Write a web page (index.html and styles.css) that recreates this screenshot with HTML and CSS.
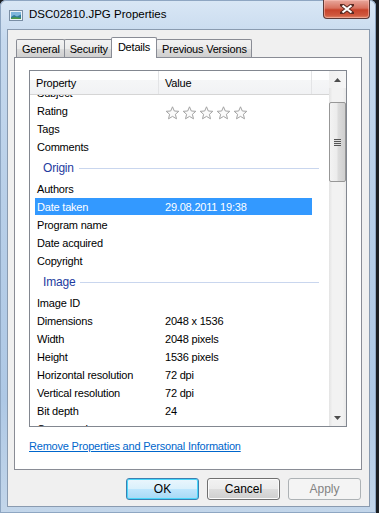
FILE: index.html
```
<!DOCTYPE html>
<html lang="en">
<head>
    <meta charset="UTF-8">
    <title>DSC02810.JPG Properties</title>
    <link rel="stylesheet" href="styles.css">
</head>
<body>
    <div class="window">
        <div class="titlebar">
            <svg class="app-icon" width="14" height="11" viewBox="0 0 14 11">
                <rect x="0.5" y="0.5" width="13" height="10" fill="#eaf2f8" stroke="#7a8ea4"/>
                <rect x="2" y="2" width="10" height="7" fill="#7fb6dc"/>
                <path d="M2 7 L5 5 L8 6.5 L12 4.5 L12 9 L2 9 Z" fill="#2f7a9a"/>
                <path d="M2 8 L6 7 L12 8 L12 9 L2 9 Z" fill="#4d9a4a"/>
            </svg>
            <span class="title">DSC02810.JPG Properties</span>
            <button class="close-btn">
                <svg width="14" height="10" viewBox="0 0 14 10">
                    <path d="M2 1 L12 9 M12 1 L2 9" stroke="#5a2a22" stroke-width="4" stroke-linecap="square"/>
                    <path d="M2.5 1.5 L11.5 8.5 M11.5 1.5 L2.5 8.5" stroke="#fff" stroke-width="2.2"/>
                </svg>
            </button>
        </div>

        <div class="client">
            <div class="tabs">
                <div class="tab">General</div>
                <div class="tab">Security</div>
                <div class="tab active">Details</div>
                <div class="tab">Previous Versions</div>
            </div>

            <div class="tab-page">
                <div class="listview">
                    <div class="list-main">
                        <div class="list-header">
                            <div class="col col-prop">Property</div>
                            <div class="col col-value">Value</div>
                            <div class="col col-rest"></div>
                        </div>
                        <div class="rows">
                            <div class="rows-inner">
                                <div class="row"><span class="prop">Subject</span></div>
                                <div class="row">
                                    <span class="prop">Rating</span>
                                    <span class="value stars">
                                        <svg width="85" height="15" viewBox="0 0 85 15">
                                            <defs>
                                                <path id="star" d="M7 0.8 L8.8 5 L13.3 5.3 L9.9 8.3 L11 12.8 L7 10.4 L3 12.8 L4.1 8.3 L0.7 5.3 L5.2 5 Z" fill="#fbfbfb" stroke="#a3a3a3" stroke-width="1" stroke-linejoin="round"/>
                                            </defs>
                                            <use href="#star" x="0.5" y="1"/>
                                            <use href="#star" x="17.5" y="1"/>
                                            <use href="#star" x="34.5" y="1"/>
                                            <use href="#star" x="51.5" y="1"/>
                                            <use href="#star" x="68.5" y="1"/>
                                        </svg>
                                    </span>
                                </div>
                                <div class="row"><span class="prop">Tags</span></div>
                                <div class="row"><span class="prop">Comments</span></div>
                                <div class="group"><span>Origin</span></div>
                                <div class="row"><span class="prop">Authors</span></div>
                                <div class="row selected"><span class="prop">Date taken</span><span class="value">29.08.2011 19:38</span></div>
                                <div class="row"><span class="prop">Program name</span></div>
                                <div class="row"><span class="prop">Date acquired</span></div>
                                <div class="row"><span class="prop">Copyright</span></div>
                                <div class="group"><span>Image</span></div>
                                <div class="row"><span class="prop">Image ID</span></div>
                                <div class="row"><span class="prop">Dimensions</span><span class="value">2048 x 1536</span></div>
                                <div class="row"><span class="prop">Width</span><span class="value">2048 pixels</span></div>
                                <div class="row"><span class="prop">Height</span><span class="value">1536 pixels</span></div>
                                <div class="row"><span class="prop">Horizontal resolution</span><span class="value">72 dpi</span></div>
                                <div class="row"><span class="prop">Vertical resolution</span><span class="value">72 dpi</span></div>
                                <div class="row"><span class="prop">Bit depth</span><span class="value">24</span></div>
                                <div class="row"><span class="prop">Compression</span></div>
                            </div>
                        </div>
                    </div>
                    <div class="scrollbar">
                        <div class="arrow up">
                            <svg width="7" height="4" viewBox="0 0 7 4"><path d="M0 4 L3.5 0 L7 4 Z" fill="#4d4d4d"/></svg>
                        </div>
                        <div class="track">
                            <div class="thumb">
                                <span class="grip"></span>
                            </div>
                        </div>
                        <div class="arrow down">
                            <svg width="7" height="4" viewBox="0 0 7 4"><path d="M0 0 L7 0 L3.5 4 Z" fill="#4d4d4d"/></svg>
                        </div>
                    </div>
                </div>
                <a class="remove-link" href="#">Remove Properties and Personal Information</a>
            </div>

            <div class="buttons">
                <button class="btn default">OK</button>
                <button class="btn">Cancel</button>
                <button class="btn" disabled>Apply</button>
            </div>
        </div>
    </div>
</body>
</html>
```

FILE: styles.css
```
body {
    margin: 0;
    background: #1b1e22;
    font-family: "Liberation Sans", Arial, sans-serif;
    font-size: 11px;
    letter-spacing: -0.2px;
    color: #000;
}
.window {
    width: 376px;
    height: 513px;
    box-sizing: border-box;
    padding: 0 6px 6px 7px;
    border-radius: 6px 6px 0 0;
    background: linear-gradient(to bottom, #d9e7f5 0px, #c6d9ee 40px, #b8cfe8 200px, #aec8e5 400px, #c3d6ea 513px);
    box-shadow: inset 0 0 0 1px #8ea6c2;
    display: flex;
    flex-direction: column;
}
.titlebar {
    height: 29px;
    display: flex;
    align-items: flex-start;
    position: relative;
}
.app-icon {
    margin: 10px 0 0 2px;
}
.title {
    margin: 8px 0 0 6px;
    font-size: 11.5px;
    letter-spacing: 0;
    color: #000;
}
.close-btn {
    position: absolute;
    right: 0;
    top: 0;
    width: 47px;
    height: 19px;
    padding: 0;
    border: 1px solid #5c3a38;
    border-top: none;
    border-radius: 0 0 4px 4px;
    background: linear-gradient(to bottom, #e8a89d 0%, #d8715e 45%, #c7432b 55%, #d0583e 85%, #e08a6c 100%);
    box-shadow: inset 0 0 0 1px rgba(255, 200, 190, 0.5);
    display: flex;
    align-items: center;
    justify-content: center;
}
.client {
    flex: 1;
    background: #f0f0f0;
    border: 1px solid #8a9bb0;
    display: flex;
    flex-direction: column;
    padding: 7px 7px 0 6px;
}
.tabs {
    display: flex;
    align-items: flex-end;
    padding-left: 2px;
    height: 20px;
    position: relative;
    z-index: 1;
}
.tab {
    height: 18px;
    box-sizing: border-box;
    padding: 3px 4px 0 5px;
    border: 1px solid #898c95;
    border-bottom: none;
    border-radius: 2px 2px 0 0;
    background: linear-gradient(to bottom, #f2f2f2 0%, #ebebeb 50%, #dddddd 51%, #cfcfcf 100%);
    margin-right: -1px;
}
.tab.active {
    height: 21px;
    margin: 0 -1px -1px -1px;
    padding: 3px 6px 0 6px;
    background: #fff;
    position: relative;
    z-index: 2;
}
.tab-page {
    height: 413px;
    box-sizing: border-box;
    background: #fff;
    border: 1px solid #898c95;
    padding: 12px 14px 0 14px;
}
.listview {
    height: 357px;
    box-sizing: border-box;
    border: 1px solid #828790;
    display: flex;
}
.list-main {
    flex: 1;
    display: flex;
    flex-direction: column;
    min-width: 0;
}
.list-header {
    height: 24px;
    display: flex;
    background: linear-gradient(to bottom, #ffffff 0%, #ffffff 40%, #f5f6f7 41%, #f1f2f4 100%);
    border-bottom: 1px solid #d5d5d5;
    box-sizing: border-box;
}
.col {
    box-sizing: border-box;
    border-right: 1px solid #e3e4e6;
    padding: 6px 0 0 6px;
}
.col-prop {
    width: 129px;
}
.col-value {
    width: 153px;
}
.col-rest {
    flex: 1;
    border-right: none;
}
.rows {
    flex: 1;
    overflow: hidden;
}
.rows-inner {
    margin-top: -11px;
}
.row {
    height: 18px;
    display: flex;
    align-items: center;
    margin: 0 17px 0 5px;
    box-sizing: border-box;
}
.prop {
    width: 124px;
    padding-left: 2px;
}
.value {
    padding-left: 4px;
}
.stars {
    display: flex;
    padding-top: 2px;
}
.row.selected {
    background: #3399ff;
    color: #fff;
    height: 17px;
    margin-bottom: 1px;
}
.group {
    height: 24px;
    display: flex;
    align-items: center;
    padding: 0 10px 0 13px;
    color: #1e3ba0;
    font-size: 12px;
}
.group::after {
    content: "";
    flex: 1;
    height: 1px;
    background: #c9d6ee;
    margin-left: 5px;
}
.scrollbar {
    width: 17px;
    display: flex;
    flex-direction: column;
    background: linear-gradient(to right, #e3e3e3 0%, #f2f2f2 20%, #f2f2f2 80%, #e9e9e9 100%);
}
.arrow {
    height: 17px;
    display: flex;
    align-items: center;
    justify-content: center;
}
.arrow.up {
    background: linear-gradient(to right, #f0f0f0, #f6f6f6);
}
.track {
    flex: 1;
    padding-top: 14px;
}
.thumb {
    height: 80px;
    box-sizing: border-box;
    border: 1px solid #979797;
    border-radius: 2px;
    background: linear-gradient(to right, #f3f3f3 0%, #ececec 45%, #dcdcdc 55%, #cfcfcf 100%);
    display: flex;
    align-items: center;
    justify-content: center;
}
.grip {
    width: 7px;
    height: 7px;
    background: repeating-linear-gradient(to bottom, #555 0px, #555 1px, #e0e0e0 1px, #e0e0e0 2px);
}
.remove-link {
    display: block;
    margin-top: 13px;
    color: #0066cc;
    text-decoration: underline;
}
.buttons {
    display: flex;
    justify-content: flex-end;
    gap: 8px;
    padding: 8px 1px 0 0;
}
.btn {
    width: 73px;
    height: 22px;
    border: 1px solid #707070;
    border-radius: 3px;
    background: linear-gradient(to bottom, #f2f2f2 0%, #ebebeb 50%, #dddddd 51%, #cfcfcf 100%);
    box-shadow: inset 0 0 0 1px #fcfcfc;
    font-family: "Liberation Sans", Arial, sans-serif;
    font-size: 12px;
    color: #000;
    padding: 0;
}
.btn.default {
    border-color: #3c7fb1;
    background: linear-gradient(to bottom, #eaf6fd 0%, #d9f0fc 50%, #bee6fd 51%, #a7d9f5 100%);
    box-shadow: inset 0 0 0 1px #48d7fb;
}
.btn:disabled {
    border-color: #adb2b5;
    background: #f4f4f4;
    color: #838383;
    box-shadow: none;
}
```
